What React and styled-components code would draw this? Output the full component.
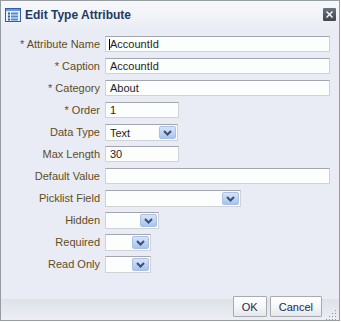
import styled, { createGlobalStyle } from 'styled-components';

const rows = [
  { label: '* Attribute Name', kind: 'text', value: 'AccountId', w: 225, caret: true },
  { label: '* Caption', kind: 'text', value: 'AccountId', w: 225 },
  { label: '* Category', kind: 'text', value: 'About', w: 225 },
  { label: '* Order', kind: 'text', value: '1', w: 74 },
  { label: 'Data Type', kind: 'select', value: 'Text', w: 73 },
  { label: 'Max Length', kind: 'text', value: '30', w: 74 },
  { label: 'Default Value', kind: 'text', value: '', w: 225 },
  { label: 'Picklist Field', kind: 'select', value: '', w: 136 },
  { label: 'Hidden', kind: 'select', value: '', w: 54 },
  { label: 'Required', kind: 'select', value: '', w: 46 },
  { label: 'Read Only', kind: 'select', value: '', w: 46 },
];

function App() {
  return (
    <>
      <GlobalStyle />
      <Dialog>
        <TitleBar>
          <TitleIcon />
          <Title>Edit Type Attribute</Title>
          <CloseButton>
            <svg width="7" height="7" viewBox="0 0 7 7">
              <path d="M0.5 0.5 L6.5 6.5 M6.5 0.5 L0.5 6.5" stroke="#fff" strokeWidth="1.4" />
            </svg>
          </CloseButton>
        </TitleBar>

        <Form>
          {rows.map((r) => (
            <Row key={r.label}>
              <Label>{r.label}</Label>
              {r.kind === 'text' ? (
                <FieldWrap>
                  <TextField $w={r.w} defaultValue={r.value} />
                  {r.caret && <Caret />}
                </FieldWrap>
              ) : (
                <Select $w={r.w}>
                  <SelectValue>{r.value}</SelectValue>
                  <DropButton>
                    <svg width="9" height="6" viewBox="0 0 9 6">
                      <path d="M1 1 L4.5 4.5 L8 1" stroke="#3c4f70" strokeWidth="2" fill="none" />
                    </svg>
                  </DropButton>
                </Select>
              )}
            </Row>
          ))}
        </Form>

        <Footer>
          <Button>OK</Button>
          <Button>Cancel</Button>
          <Grip />
        </Footer>
      </Dialog>
    </>
  );
}

export default App;

function TitleIcon() {
  return (
    <IconBox>
      <svg width="16" height="14" viewBox="0 0 16 14">
        <rect x="0.5" y="0.5" width="15" height="13" fill="#e9f0fb" stroke="#2c60ad" />
        <rect x="1" y="1" width="14" height="2" fill="#6e98d4" />
        {[5, 8, 11].map((y) => (
          <g key={y}>
            <rect x="3" y={y - 0.5} width="2" height="2" fill="#2c60ad" />
            <rect x="6" y={y - 0.5} width="7" height="2" fill="#5a88c9" />
          </g>
        ))}
      </svg>
    </IconBox>
  );
}

function Grip() {
  const dots = [];
  for (let r = 0; r < 4; r++) {
    for (let c = 3 - r; c < 4; c++) {
      dots.push(<rect key={`${r}-${c}`} x={c * 3} y={r * 3} width="1" height="1" fill="#8f959c" />);
    }
  }
  return (
    <GripBox>
      <svg width="12" height="12" viewBox="0 0 12 12">{dots}</svg>
    </GripBox>
  );
}

const GlobalStyle = createGlobalStyle`
  body {
    margin: 0;
    background: #ffffff;
    font-family: 'Liberation Sans', Arial, sans-serif;
  }
`;

const Dialog = styled.div`
  width: 340px;
  height: 321px;
  box-sizing: border-box;
  border: 1px solid #979ca3;
  background: #e9ecf4;
  display: flex;
  flex-direction: column;
`;

const TitleBar = styled.div`
  height: 27px;
  flex: none;
  display: flex;
  align-items: center;
  padding-left: 4px;
  background: linear-gradient(to bottom, #f7f8fa 0%, #f1f3f7 60%, #e9ecf4 100%);
`;

const IconBox = styled.div`
  width: 16px;
  height: 14px;
  display: flex;
  margin-top: 1px;
`;

const Title = styled.span`
  margin-left: 4px;
  font-size: 12px;
  font-weight: 700;
  color: #1d3b63;
  flex: 1;
`;

const CloseButton = styled.div`
  width: 13px;
  height: 13px;
  margin-right: 3px;
  border-radius: 1px;
  background: linear-gradient(to bottom, #6a737e, #3f4852);
  display: flex;
  align-items: center;
  justify-content: center;
`;

const Form = styled.div`
  flex: 1;
  padding-top: 8px;
  display: grid;
  grid-template-columns: 99px 1fr;
  grid-auto-rows: 16px;
  row-gap: 6px;
  column-gap: 5px;
  align-content: start;
`;

const Row = styled.div`
  display: contents;
`;

const Label = styled.label`
  font-size: 11px;
  color: #5f4c1d;
  text-align: right;
  align-self: center;
  white-space: nowrap;
`;

const FieldWrap = styled.div`
  position: relative;
  display: flex;
`;

const TextField = styled.input.attrs({ type: 'text' })`
  width: ${(p) => p.$w}px;
  height: 16px;
  box-sizing: border-box;
  margin: 0;
  padding: 0 4px;
  border: 1px solid #cfd3d8;
  border-top-color: #a3a7ad;
  background: #fcfdfd;
  font-family: 'Liberation Sans', Arial, sans-serif;
  font-size: 11px;
  color: #1e1e1e;
  outline: none;
`;

const Caret = styled.span`
  position: absolute;
  left: 4px;
  top: 3px;
  width: 1px;
  height: 11px;
  background: #000;
`;

const Select = styled.div`
  width: ${(p) => p.$w}px;
  height: 17px;
  box-sizing: border-box;
  border: 1px solid #cfd3d8;
  border-top-color: #a3a7ad;
  background: #fcfdfd;
  display: flex;
  align-items: center;
  padding: 0 1px 0 4px;
`;

const SelectValue = styled.span`
  flex: 1;
  font-size: 11px;
  color: #1e1e1e;
`;

const DropButton = styled.div`
  width: 17px;
  height: 13px;
  box-sizing: border-box;
  border: 1px solid #a9c0e3;
  border-radius: 2px;
  background: linear-gradient(to bottom, #d6e4f9, #a9c3ee);
  display: flex;
  align-items: center;
  justify-content: center;
`;

const Footer = styled.div`
  position: relative;
  height: 28px;
  flex: none;
  box-sizing: border-box;
  padding: 4px 17px 0 0;
  display: flex;
  justify-content: flex-end;
  align-items: flex-start;
  gap: 3px;
  background: linear-gradient(to bottom, #e9ecf4 0, #e9ecf4 7px, #dfe2ea 7px, #eceef4 100%);
`;

const Button = styled.button`
  height: 21px;
  min-width: 34px;
  padding: 0 8px;
  box-sizing: border-box;
  border: 1px solid #a7abb1;
  border-radius: 1px;
  background: linear-gradient(to bottom, #ffffff 0%, #f6f7f9 50%, #e5e7eb 100%);
  font-family: 'Liberation Sans', Arial, sans-serif;
  font-size: 11px;
  color: #1c2a52;
`;

const GripBox = styled.div`
  position: absolute;
  right: 1px;
  bottom: 0px;
  width: 12px;
  height: 12px;
`;
